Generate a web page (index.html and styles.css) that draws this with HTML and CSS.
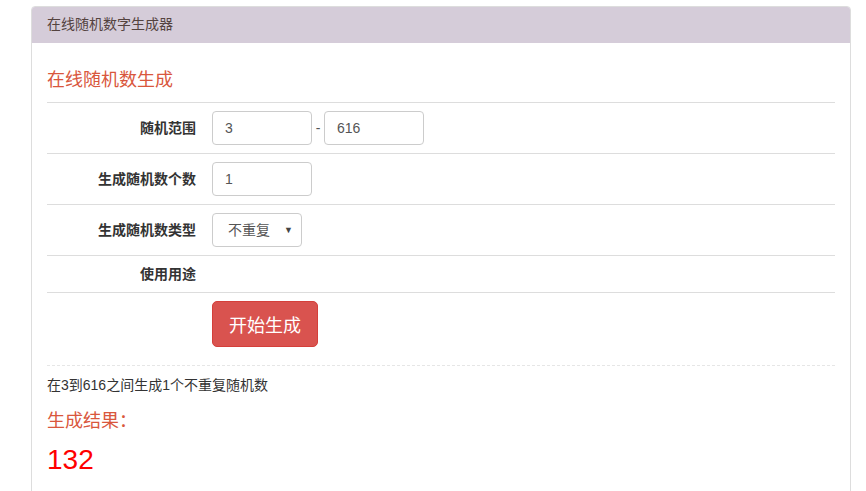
FILE: index.html
```html
<!DOCTYPE html>
<html>
<head>
    <meta charset="utf-8">
    <title>在线随机数字生成器</title>
    <link rel="stylesheet" href="styles.css">
</head>
<body>
<div class="panel">
    <div class="panel-heading">在线随机数字生成器</div>
    <div class="panel-body">
        <h3 class="title">在线随机数生成</h3>
        <table class="form-table">
            <tr>
                <th>随机范围</th>
                <td>
                    <div class="range">
                        <input class="form-control" type="text" value="3">
                        <span class="sep">-</span>
                        <input class="form-control" type="text" value="616">
                    </div>
                </td>
            </tr>
            <tr>
                <th>生成随机数个数</th>
                <td><input class="form-control" type="text" value="1"></td>
            </tr>
            <tr>
                <th>生成随机数类型</th>
                <td>
                    <div class="select">
                        <span>不重复</span>
                        <span class="caret">▼</span>
                    </div>
                </td>
            </tr>
            <tr>
                <th>使用用途</th>
                <td></td>
            </tr>
            <tr>
                <th></th>
                <td><button class="btn-danger">开始生成</button></td>
            </tr>
        </table>
        <hr class="dashed">
        <p class="summary">在3到616之间生成1个不重复随机数</p>
        <h3 class="title result-title">生成结果：</h3>
        <div class="result">132</div>
    </div>
</div>
</body>
</html>
```

FILE: styles.css
```css
body {
    margin: 0;
    font-family: "Liberation Sans", Arial, "Noto Sans CJK SC", sans-serif;
    font-size: 14px;
    color: #333;
    background: #fff;
}
.panel {
    margin: 6px 0 0 31px;
    width: 820px;
    box-sizing: border-box;
    border: 1px solid #ddd;
    border-radius: 4px 4px 0 0;
    height: 500px;
}
.panel-heading {
    background: #d5ccd9;
    color: #54433f;
    font-size: 14px;
    height: 36px;
    line-height: 34px;
    padding: 0 15px;
    border-radius: 3px 3px 0 0;
}
.panel-body {
    padding: 0 15px;
}
.title {
    margin: 0;
    font-weight: normal;
    font-size: 18px;
    color: #d9573d;
    line-height: 20px;
    padding: 27px 0 12px;
}
.form-table {
    width: 100%;
    border-collapse: collapse;
}
.form-table th,
.form-table td {
    border-top: 1px solid #ddd;
    padding: 8px;
    line-height: 20px;
    vertical-align: middle;
}
.form-table th {
    width: 141px;
    text-align: right;
    font-size: 14px;
    font-weight: bold;
}
.form-control {
    display: block;
    box-sizing: border-box;
    width: 100px;
    height: 34px;
    padding: 6px 12px;
    border: 1px solid #ccc;
    border-radius: 4px;
    font: inherit;
    color: #555;
}
.range {
    display: flex;
    align-items: center;
}
.sep {
    width: 12px;
    text-align: center;
    color: #555;
}
.select {
    display: flex;
    align-items: center;
    justify-content: space-between;
    box-sizing: border-box;
    width: 90px;
    height: 34px;
    padding: 0 8px 0 15px;
    border: 1px solid #ccc;
    border-radius: 4px;
    color: #555;
}
.caret {
    font-size: 9px;
    color: #444;
}
.btn-danger {
    display: block;
    margin: 0;
    width: 106px;
    height: 46px;
    background: #d9534f;
    border: 1px solid #d43f3a;
    border-radius: 5px;
    color: #fff;
    font-family: inherit;
    font-size: 18px;
}
.dashed {
    margin: 10px 0 0;
    border: 0;
    border-top: 1px dashed #e6e6e6;
}
.summary {
    margin: 9px 0 0;
    font-size: 14px;
    line-height: 20px;
}
.result-title {
    padding: 16px 0 0;
}
.result {
    color: #f00;
    font-size: 28px;
    line-height: 32px;
    margin-top: 13px;
}
```
